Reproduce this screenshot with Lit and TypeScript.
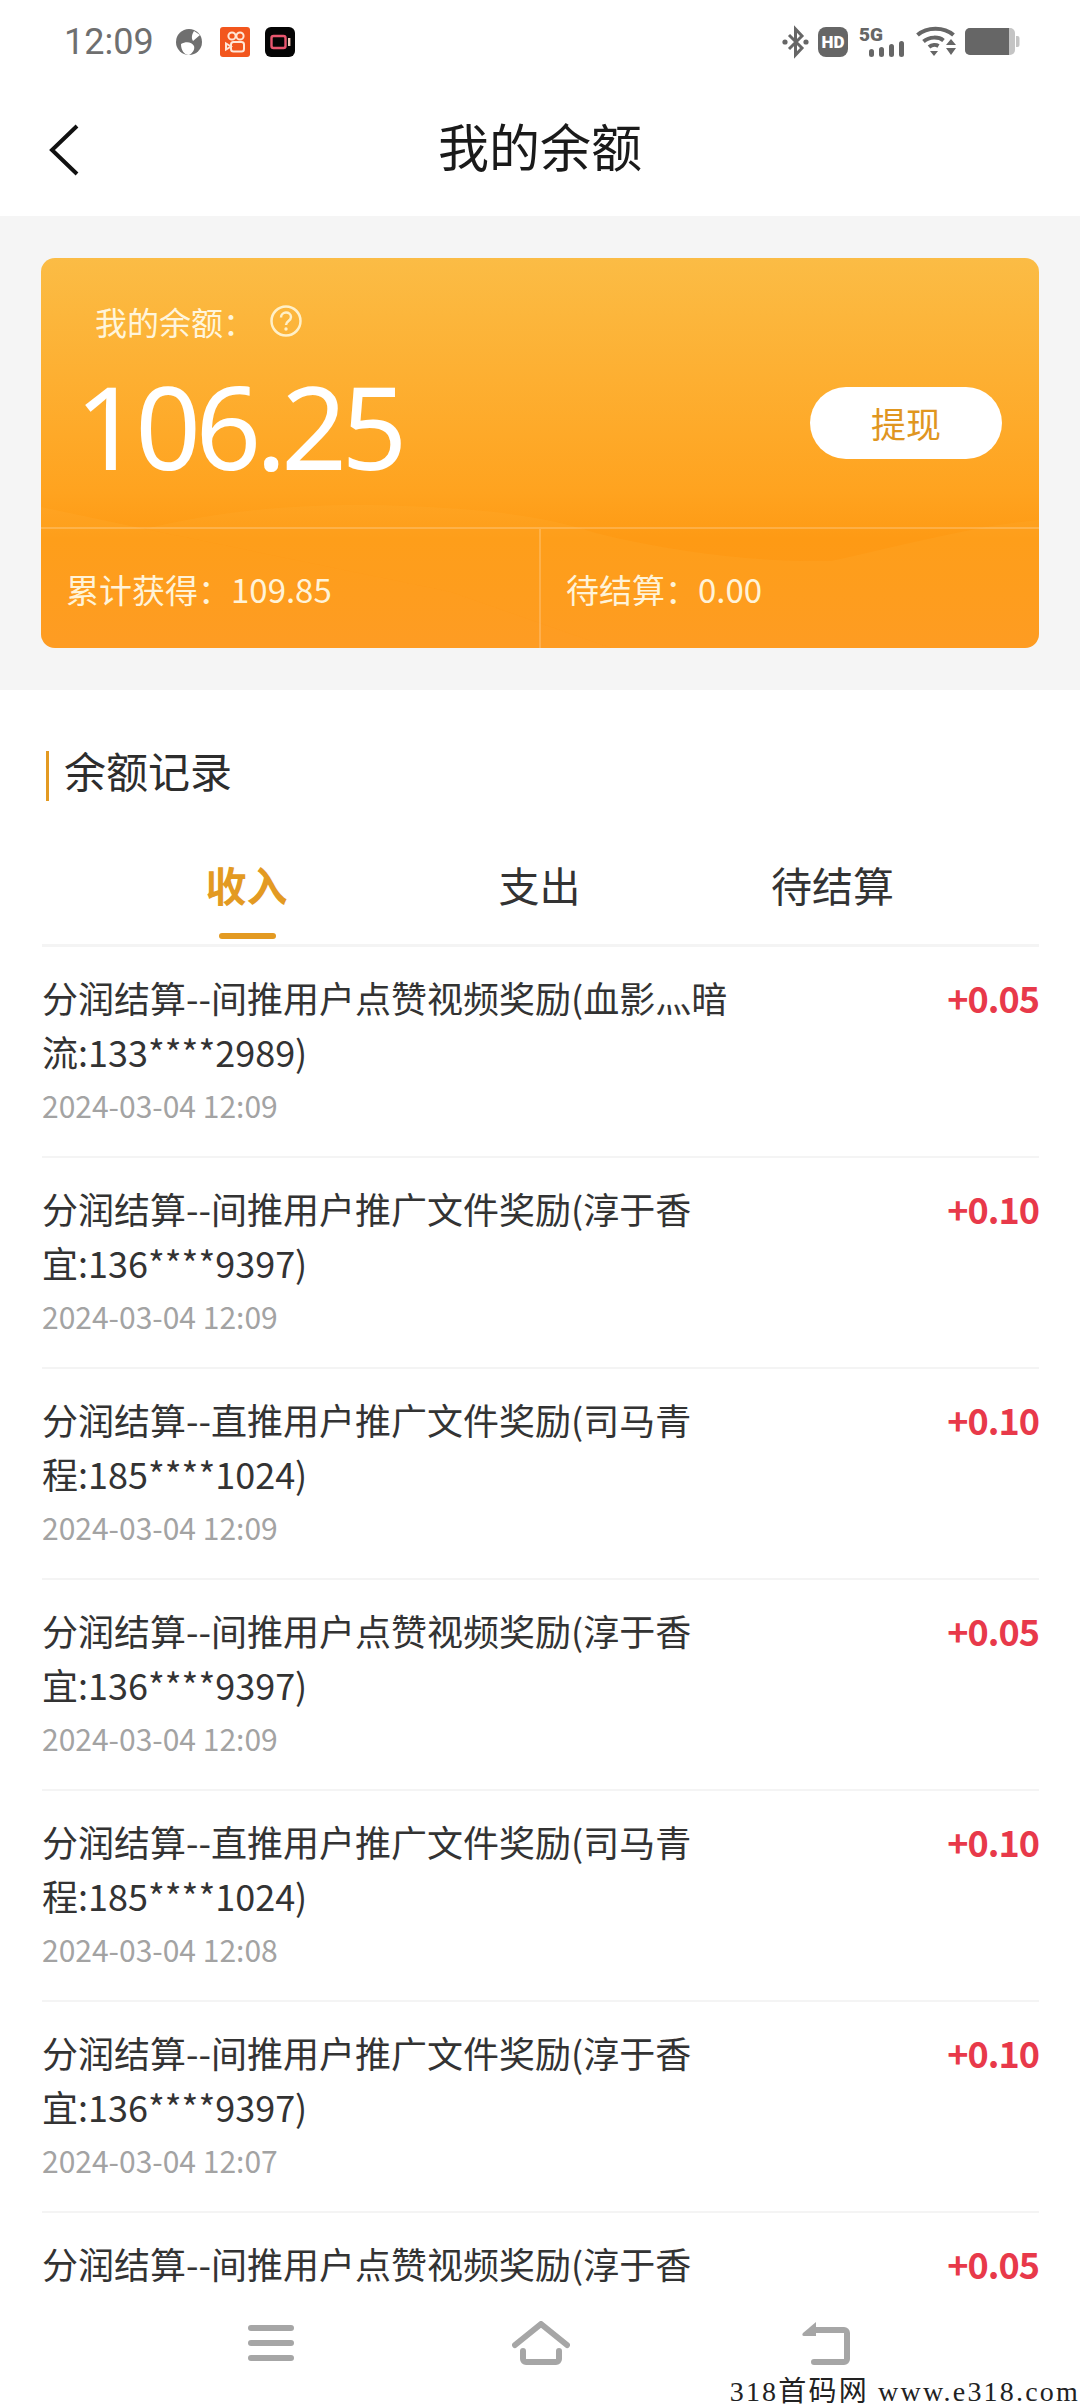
import { LitElement, html, css } from 'lit';
import { customElement, state } from 'lit/decorators.js';

interface Rec {
	title: string;
	amount: string;
	time: string;
}

const records: Rec[] = [
	{ title: '分润结算--间推用户点赞视频奖励(血影灬暗流:133****2989)', amount: '+0.05', time: '2024-03-04 12:09' },
	{ title: '分润结算--间推用户推广文件奖励(淳于香宜:136****9397)', amount: '+0.10', time: '2024-03-04 12:09' },
	{ title: '分润结算--直推用户推广文件奖励(司马青程:185****1024)', amount: '+0.10', time: '2024-03-04 12:09' },
	{ title: '分润结算--间推用户点赞视频奖励(淳于香宜:136****9397)', amount: '+0.05', time: '2024-03-04 12:09' },
	{ title: '分润结算--直推用户推广文件奖励(司马青程:185****1024)', amount: '+0.10', time: '2024-03-04 12:08' },
	{ title: '分润结算--间推用户推广文件奖励(淳于香宜:136****9397)', amount: '+0.10', time: '2024-03-04 12:07' },
	{ title: '分润结算--间推用户点赞视频奖励(淳于香宜:136****9397)', amount: '+0.05', time: '2024-03-04 12:07' },
];

@customElement('app-root')
export class AppRoot extends LitElement {

	@state() private _tab = 0;

	static styles = css`
		:host {
			display: flex;
			flex-direction: column;
			position: relative;
			width: 1080px;
			height: 2408px;
			overflow: hidden;
			background: #ffffff;
			font-family: "Noto Sans CJK SC", "Noto Sans", sans-serif;
			color: #333333;
		}
		.status {
			display: flex;
			align-items: center;
			justify-content: space-between;
			height: 84px;
			padding: 0 60px 0 64px;
			flex: none;
		}
		.status-left, .status-right {
			display: flex;
			align-items: center;
		}
		.status-left { gap: 15px; }
		.status-right { gap: 9px; }
		.time {
			font-family: Roboto, sans-serif;
			font-size: 36px;
			color: #6f6f6f;
			margin-right: 6px;
		}
		.status svg { display: block; overflow: visible; }
		.header {
			display: flex;
			align-items: center;
			justify-content: center;
			position: relative;
			height: 132px;
			padding-bottom: 10px;
			box-sizing: border-box;
			flex: none;
		}
		.header h1 {
			margin: 0;
			font-size: 51px;
			font-weight: 400;
			color: #1a1a1a;
		}
		.back {
			position: absolute;
			left: 48px;
			top: 40px;
		}
		.summary {
			background: #f5f5f5;
			padding: 42px 41px;
			flex: none;
		}
		.card {
			position: relative;
			height: 390px;
			border-radius: 14px;
			overflow: hidden;
			background: linear-gradient(180deg, #fbbc45 0%, #ffa31f 60%, #fe9a14 72%, #fe981d 100%);
			color: #ffffff;
			display: flex;
			flex-direction: column;
		}
		.waves {
			position: absolute;
			left: 0;
			top: 0;
		}
		.card-top {
			position: relative;
			flex: 1;
			padding: 44px 24px 0 25px;
		}
		.card-label {
			display: flex;
			align-items: center;
			gap: 14px;
			padding-left: 29px;
			font-size: 32px;
			line-height: 38px;
			color: #fff5dc;
		}
		.balance-row {
			display: flex;
			align-items: center;
			justify-content: space-between;
			margin-top: 24px;
		}
		.balance {
			font-family: "Noto Sans", sans-serif;
			font-size: 115px;
			line-height: 124px;
			letter-spacing: -5.5px;
			padding-left: 9px;
		}
		.withdraw {
			width: 192px;
			height: 72px;
			border-radius: 36px;
			background: #ffffff;
			color: #e0961f;
			font-size: 35px;
			display: flex;
			align-items: center;
			justify-content: center;
			margin-right: 13px;
			margin-top: -7px;
		}
		.stats {
			position: relative;
			display: flex;
			height: 119px;
			border-top: 2px solid rgba(255, 255, 255, 0.2);
			font-size: 33px;
			color: #fff3d8;
		}
		.stat {
			flex: 1;
			display: flex;
			align-items: center;
			padding-left: 25px;
		}
		.stat + .stat {
			border-left: 2px solid rgba(255, 255, 255, 0.2);
		}
		.records {
			flex: 1;
			min-height: 0;
			overflow: hidden;
			padding: 0 41px 0 42px;
		}
		.section-title {
			display: flex;
			align-items: center;
			gap: 15px;
			margin: 61px 0 0 4px;
			height: 50px;
			font-size: 42px;
			line-height: 50px;
			color: #2d2d2d;
		}
		.section-title span {
			position: relative;
			top: -6px;
		}
		.section-title::before {
			content: '';
			width: 3px;
			height: 50px;
			background: #e39a22;
		}
		.tabs {
			display: grid;
			grid-template-columns: repeat(3, 1fr);
			margin-top: 47px;
			padding: 0 60px 0 58px;
			height: 96px;
			border-bottom: 3px solid #f4f4f4;
		}
		.tab {
			position: relative;
			display: flex;
			justify-content: center;
			padding-top: 6px;
			font-size: 41px;
			line-height: 60px;
			color: #333333;
			cursor: pointer;
		}
		.tab.active {
			color: #e39a22;
			font-weight: 700;
		}
		.tab.active::after {
			content: '';
			position: absolute;
			left: 50%;
			bottom: 5px;
			width: 57px;
			height: 6px;
			margin-left: -28px;
			border-radius: 3px;
			background: #e39a22;
		}
		.row {
			display: flex;
			justify-content: space-between;
			align-items: flex-start;
			height: 211px;
			box-sizing: border-box;
			padding-top: 23px;
			border-bottom: 2px solid #f4f4f4;
		}
		.row-main { width: 700px; }
		.row-title {
			font-size: 36px;
			line-height: 54px;
			color: #333333;
		}
		.row-time {
			margin-top: 7px;
			font-size: 30px;
			line-height: 40px;
			color: #a3a3a3;
		}
		.row-amount {
			font-size: 36px;
			line-height: 54px;
			font-weight: 700;
			letter-spacing: -1px;
			color: #e8394a;
		}
		.nav {
			display: flex;
			align-items: center;
			height: 118px;
			padding: 0 0 12px 248px;
			box-sizing: border-box;
			background: #ffffff;
			flex: none;
		}
		.nav svg { display: block; }
		.nav .home { margin-left: 218px; }
		.nav .ret { margin-left: 232px; }
		.watermark {
			position: absolute;
			right: 0;
			bottom: 0;
			font-family: "Liberation Serif", "Noto Sans CJK SC", serif;
			font-size: 28px;
			line-height: 32px;
			letter-spacing: 2.2px;
			color: #222222;
			white-space: nowrap;
		}
	`;

	private _statusLeft() {
		return html`
			<svg width="30" height="30" viewBox="0 0 30 30">
				<circle cx="14" cy="15" r="13" fill="#6f6f6f"/>
				<path d="M6 17c5-3 11-2 13 2 1 3-1 7-5 9-5 0-8-5-8-11zM19 4l6 4-7 6c-2-3-1-7 1-10z" fill="#ffffff"/>
			</svg>
			<svg width="30" height="30" viewBox="0 0 30 30">
				<rect width="30" height="30" rx="3" fill="#f2561d"/>
				<g fill="none" stroke="#ffe6d6" stroke-width="2">
					<circle cx="12" cy="9" r="3.6"/>
					<circle cx="20" cy="9" r="3.6"/>
					<rect x="11" y="15" width="13" height="9.5" rx="2.5"/>
					<path d="M11 19.5l-5-3v6z"/>
				</g>
			</svg>
			<svg width="30" height="30" viewBox="0 0 30 30">
				<rect width="30" height="30" rx="6" fill="#050505"/>
				<rect x="6.5" y="9" width="14" height="12" rx="2" fill="none" stroke="#e9576f" stroke-width="2.4"/>
				<rect x="23" y="11" width="2.4" height="8" fill="#f0c9b8"/>
			</svg>
		`;
	}

	private _statusRight() {
		return html`
			<svg width="27" height="30" viewBox="0 0 27 30">
				<path d="M7 8l13 13-6.500 7V2L20 9 7 22" fill="none" stroke="#666666" stroke-width="3"/>
				<circle cx="3" cy="15" r="2.6" fill="#666666"/>
				<circle cx="24" cy="15" r="2.6" fill="#666666"/>
			</svg>
			<svg width="30" height="30" viewBox="0 0 30 30">
				<rect width="30" height="30" rx="8" fill="#666666"/>
				<text x="15" y="21" text-anchor="middle" font-family="Roboto, sans-serif" font-size="17" font-weight="900" fill="#ffffff">HD</text>
			</svg>
			<svg width="46" height="30" viewBox="0 0 46 30" style="margin-left:2px">
				<text x="0" y="14" font-family="Roboto, sans-serif" font-size="19" font-weight="900" fill="#666666">5G</text>
				<rect x="10" y="22" width="5" height="8" rx="2.5" fill="#666666"/>
				<rect x="20" y="20" width="5" height="10" rx="2.5" fill="#666666"/>
				<rect x="30" y="17" width="5" height="13" rx="2.5" fill="#666666"/>
				<rect x="40" y="14" width="5" height="16" rx="2.5" fill="#666666"/>
			</svg>
			<svg width="40" height="30" viewBox="0 0 40 30" style="margin-left:2px">
				<g fill="none" stroke="#666666" stroke-width="4">
					<path d="M1.5 8C11-.5 28-.5 37.500 8"/>
					<path d="M7.500 14.500c6-5 15-5 20 -1"/>
					<path d="M13 20c3-2.500 7-2.500 9.500-1"/>
				</g>
				<path d="M14 24h8l-4 5zM30 18l5-6 5 6zM30 21h10l-5 7z" fill="#666666"/>
			</svg>
			<svg width="55" height="28" viewBox="0 0 55 28">
				<rect width="50" height="27" rx="5" fill="#c4c4c4"/>
				<path d="M5 0h39v27H5a5 5 0 0 1-5-5V5a5 5 0 0 1 5-5z" fill="#666666"/>
				<path d="M51 8h1.500a2 2 0 0 1 2 2v7a2 2 0 0 1-2 2H51z" fill="#c4c4c4"/>
			</svg>
		`;
	}

	render() {
		const tabs = ['收入', '支出', '待结算'];
		return html`
			<div class="status">
				<div class="status-left">
					<span class="time">12:09</span>
					${this._statusLeft()}
				</div>
				<div class="status-right">${this._statusRight()}</div>
			</div>

			<div class="header">
				<svg class="back" width="32" height="52" viewBox="0 0 32 52">
					<path d="M29 2L4 26l25 24" fill="none" stroke="#111111" stroke-width="4"/>
				</svg>
				<h1>我的余额</h1>
			</div>

			<div class="summary">
				<div class="card">
					<svg class="waves" width="998" height="390" viewBox="0 0 998 390">
						<!-- two soft layers, the dark wedge is what stays uncovered -->
						<path d="M104 271C180 252 260 246 330 247 420 249 490 254 555 275 640 296 720 304 790 303 860 288 930 268 998 262V390H570L410 334z" fill="#ffc45a" opacity=".09"/>
						<path d="M0 249L104 271 410 334 570 390H0z" fill="#ffc45a" opacity=".1"/>
					</svg>
					<div class="card-top">
						<div class="card-label">
							<span>我的余额：</span>
							<svg width="34" height="34" viewBox="0 0 34 34">
								<circle cx="17" cy="17" r="14.500" fill="none" stroke="#fff0c8" stroke-width="2.500"/>
								<path d="M12 13.500c0-6.500 10-6.500 10 -.5 0 4-5 4-5 8" fill="none" stroke="#fff0c8" stroke-width="2.500"/>
								<circle cx="17" cy="25" r="1.700" fill="#fff0c8"/>
							</svg>
						</div>
						<div class="balance-row">
							<span class="balance">106.25</span>
							<div class="withdraw">提现</div>
						</div>
					</div>
					<div class="stats">
						<div class="stat">累计获得：109.85</div>
						<div class="stat">待结算：0.00</div>
					</div>
				</div>
			</div>

			<div class="records">
				<div class="section-title"><span>余额记录</span></div>
				<div class="tabs">
					${tabs.map((t, i) => html`
						<div class="tab ${i === this._tab ? 'active' : ''}" @click="${() => { this._tab = i; }}">${t}</div>
					`)}
				</div>
				${records.map(r => html`
					<div class="row">
						<div class="row-main">
							<div class="row-title">${r.title}</div>
							<div class="row-time">${r.time}</div>
						</div>
						<div class="row-amount">${r.amount}</div>
					</div>
				`)}
			</div>

			<div class="nav">
				<svg width="46" height="36" viewBox="0 0 46 36">
					<g fill="#a6a6a6">
						<rect width="46" height="6" rx="3"/>
						<rect y="15" width="46" height="6" rx="3"/>
						<rect y="30" width="46" height="6" rx="3"/>
					</g>
				</svg>
				<svg class="home" width="58" height="44" viewBox="0 0 58 44">
					<g fill="none" stroke="#a6a6a6" stroke-width="6" stroke-linecap="round" stroke-linejoin="round">
						<path d="M3 24L29 3l26 21"/>
						<path d="M11 30v8a3 3 0 0 0 3 3h30a3 3 0 0 0 3-3v-8"/>
					</g>
				</svg>
				<svg class="ret" width="48" height="44" viewBox="0 0 48 44">
					<path d="M12 9h30a3 3 0 0 1 3 3v26a3 3 0 0 1-3 3H12" fill="none" stroke="#a6a6a6" stroke-width="6" stroke-linecap="round"/>
					<path d="M14 1v14H2c-2 0-2-2-1-3z" fill="#a6a6a6"/>
				</svg>
			</div>

			<div class="watermark">318首码网 www.e318.com</div>
		`;
	}
}
